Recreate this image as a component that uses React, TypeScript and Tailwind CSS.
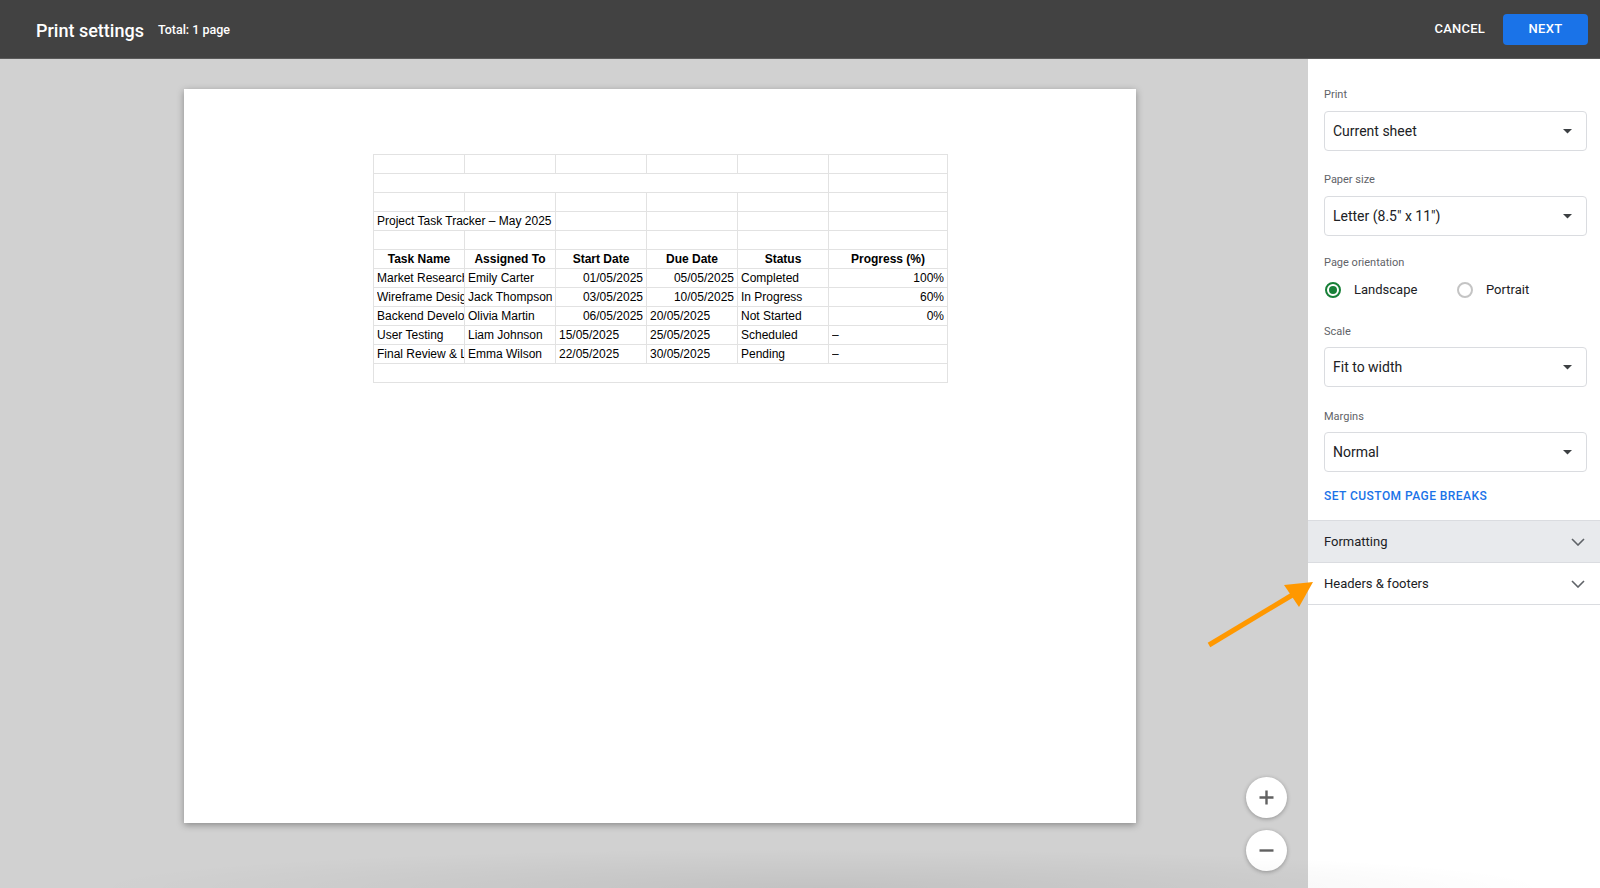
import { ReactNode } from 'react';

// ── Table data ──
type Cell = { text?: string; align?: 'left' | 'right' | 'center'; bold?: boolean; span?: number };

const ROWS: Cell[][] = [
  [{}, {}, {}, {}, {}, {}],
  [{ span: 5 }, {}],
  [{}, {}, {}, {}, {}, {}],
  [{ text: 'Project Task Tracker – May 2025', span: 2 }, {}, {}, {}, {}],
  [{}, {}, {}, {}, {}, {}],
  [
    { text: 'Task Name', align: 'center', bold: true },
    { text: 'Assigned To', align: 'center', bold: true },
    { text: 'Start Date', align: 'center', bold: true },
    { text: 'Due Date', align: 'center', bold: true },
    { text: 'Status', align: 'center', bold: true },
    { text: 'Progress (%)', align: 'center', bold: true },
  ],
  [
    { text: 'Market Research' },
    { text: 'Emily Carter' },
    { text: '01/05/2025', align: 'right' },
    { text: '05/05/2025', align: 'right' },
    { text: 'Completed' },
    { text: '100%', align: 'right' },
  ],
  [
    { text: 'Wireframe Design' },
    { text: 'Jack Thompson' },
    { text: '03/05/2025', align: 'right' },
    { text: '10/05/2025', align: 'right' },
    { text: 'In Progress' },
    { text: '60%', align: 'right' },
  ],
  [
    { text: 'Backend Development' },
    { text: 'Olivia Martin' },
    { text: '06/05/2025', align: 'right' },
    { text: '20/05/2025' },
    { text: 'Not Started' },
    { text: '0%', align: 'right' },
  ],
  [
    { text: 'User Testing' },
    { text: 'Liam Johnson' },
    { text: '15/05/2025' },
    { text: '25/05/2025' },
    { text: 'Scheduled' },
    { text: '–' },
  ],
  [
    { text: 'Final Review & Launch' },
    { text: 'Emma Wilson' },
    { text: '22/05/2025' },
    { text: '30/05/2025' },
    { text: 'Pending' },
    { text: '–' },
  ],
  [{ span: 6 }],
];

const COLS = [91, 91, 91, 91, 91, 119];

function SheetTable() {
  return (
    <table className="w-[574px] table-fixed border-collapse font-['Liberation_Sans',Arial,sans-serif] text-[12px] text-black">
      <colgroup>
        {COLS.map((w, i) => (
          <col key={i} style={{ width: w }} />
        ))}
      </colgroup>
      <tbody>
        {ROWS.map((row, r) => (
          <tr key={r} className="h-[19px]">
            {row.map((c, i) => (
              <td
                key={i}
                colSpan={c.span}
                className={`h-[19px] overflow-hidden whitespace-nowrap border border-[#e2e2e2] py-0 leading-[17px] ${
                  c.align === 'right'
                    ? 'px-[3px] text-right'
                    : c.align === 'center'
                      ? 'px-[3px] text-center'
                      : 'pl-[3px] pr-0 text-left'
                } ${c.bold ? 'font-bold' : ''}`}
              >
                <div className="overflow-hidden">{c.text ?? ''}</div>
              </td>
            ))}
          </tr>
        ))}
      </tbody>
    </table>
  );
}

// ── Header ──
function Header() {
  return (
    <div className="flex h-[59px] shrink-0 items-center border-b border-[#5a5a5a] bg-[#424242] pl-[36px] pr-[12px] text-white">
      <span className="mt-[3px] text-[18px] font-medium">Print settings</span>
      <span className="ml-[14px] mt-[3px] text-[12.5px] font-medium">Total: 1 page</span>
      <button className="ml-auto text-[13px] font-medium tracking-[0.2px]">CANCEL</button>
      <button className="ml-[18px] h-[31px] w-[85px] rounded-[4px] bg-[#1a73e8] text-[13px] font-medium tracking-[0.3px]">
        NEXT
      </button>
    </div>
  );
}

// ── Preview ──
function ZoomButton({ children }: { children: ReactNode }) {
  return (
    <button className="flex h-[41px] w-[41px] items-center justify-center rounded-full bg-white shadow-[0_1px_4px_rgba(0,0,0,0.3)]">
      {children}
    </button>
  );
}

function Preview() {
  return (
    <div className="relative flex-1 bg-[#d1d1d1] pl-[184px] pt-[30px]">
      <div className="h-[734px] w-[952px] bg-white pl-[189px] pt-[65px] shadow-[0_2px_7px_rgba(0,0,0,0.35)]">
        <SheetTable />
      </div>
      <div className="absolute bottom-[17px] right-[21px] flex flex-col gap-[12px]">
        <ZoomButton>
          <svg width="15" height="15" viewBox="0 0 15 15">
            <path d="M7.5 0.5v14M0.5 7.5h14" stroke="#616161" strokeWidth="2.4" />
          </svg>
        </ZoomButton>
        <ZoomButton>
          <svg width="15" height="15" viewBox="0 0 15 15">
            <path d="M0.5 7.5h14" stroke="#616161" strokeWidth="2.4" />
          </svg>
        </ZoomButton>
      </div>
    </div>
  );
}

// ── Settings panel ──
function Caret() {
  return (
    <svg width="9" height="5" viewBox="0 0 9 5">
      <path d="M0 0h9L4.5 4.5z" fill="#3c4043" />
    </svg>
  );
}

function Chevron() {
  return (
    <svg width="14" height="8" viewBox="0 0 14 8">
      <path d="M1 1l6 6 6-6" fill="none" stroke="#5f6368" strokeWidth="1.6" />
    </svg>
  );
}

function Label({ children, className = '' }: { children: ReactNode; className?: string }) {
  return <div className={`h-[14px] text-[11px] leading-[14px] text-[#5f6368] ${className}`}>{children}</div>;
}

function Select({ value, className = '' }: { value: string; className?: string }) {
  return (
    <div
      className={`flex h-[40px] items-center justify-between rounded-[4px] border border-[#dadce0] pl-[8px] pr-[14px] text-[14px] text-[#202124] ${className}`}
    >
      <span>{value}</span>
      <Caret />
    </div>
  );
}

function Radio({ label, checked }: { label: string; checked?: boolean }) {
  return (
    <div className="flex items-center">
      <span
        className={`flex h-[16px] w-[16px] items-center justify-center rounded-full border-2 ${
          checked ? 'border-[#188038]' : 'border-[#c4c4c4]'
        }`}
      >
        {checked && <span className="h-[8px] w-[8px] rounded-full bg-[#188038]" />}
      </span>
      <span className="ml-[13px] text-[13px] text-[#202124]">{label}</span>
    </div>
  );
}

function SettingsPanel() {
  return (
    <div className="flex w-[292px] shrink-0 flex-col bg-white">
      <div className="pl-[16px] pr-[13px] pt-[29px]">
        <Label>Print</Label>
        <Select value="Current sheet" className="mt-[9px]" />

        <Label className="mt-[22px]">Paper size</Label>
        <Select value={'Letter (8.5" x 11")'} className="mt-[9px]" />

        <Label className="mt-[20px]">Page orientation</Label>
        <div className="mt-[10px] flex h-[20px] items-center pl-[1px]">
          <div className="w-[132px]">
            <Radio label="Landscape" checked />
          </div>
          <Radio label="Portrait" />
        </div>

        <Label className="mt-[25px]">Scale</Label>
        <Select value="Fit to width" className="mt-[8px]" />

        <Label className="mt-[23px]">Margins</Label>
        <Select value="Normal" className="mt-[8px]" />

        <div className="mt-[16px] h-[16px] text-[12px] font-medium leading-[16px] tracking-[0.45px] text-[#1a73e8]">
          SET CUSTOM PAGE BREAKS
        </div>
      </div>

      <div className="mt-[16px] flex h-[42px] items-center justify-between border-t border-[#dadce0] bg-[#e8eaed] pl-[16px] pr-[15px] text-[13px] text-[#202124]">
        <span>Formatting</span>
        <Chevron />
      </div>
      <div className="flex h-[43px] items-center justify-between border-y border-[#dadce0] pl-[16px] pr-[15px] text-[13px] text-[#202124]">
        <span>Headers &amp; footers</span>
        <Chevron />
      </div>
    </div>
  );
}

// ── Annotation arrow ──
function Arrow() {
  return (
    <svg className="pointer-events-none absolute left-0 top-0" width="1600" height="888">
      <line x1="1209" y1="645" x2="1294" y2="594" stroke="#ff9800" strokeWidth="5" />
      <polygon points="1313,582 1284,585 1299,607" fill="#ff9800" />
    </svg>
  );
}

// ── Main page ──
export default function App() {
  return (
    <div className="relative flex h-[888px] w-[1600px] flex-col overflow-hidden font-['Roboto',sans-serif]">
      <Header />
      <div className="flex min-h-0 flex-1">
        <Preview />
        <SettingsPanel />
      </div>
      <Arrow />
      <div className="pointer-events-none absolute bottom-0 left-[80px] right-[40px] h-[40px] bg-[radial-gradient(ellipse_at_bottom,rgba(0,0,0,0.07),transparent_70%)]" />
    </div>
  );
}
